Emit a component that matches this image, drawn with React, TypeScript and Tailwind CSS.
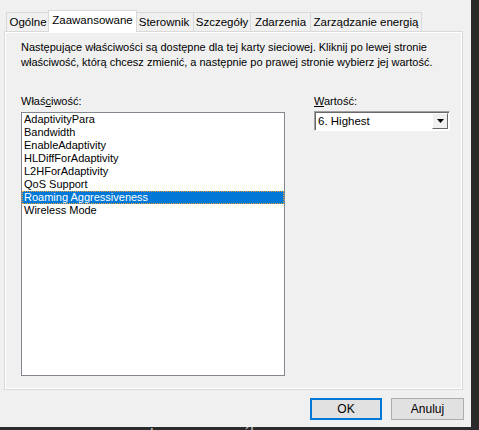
import React from "react";

const tabs = [
  { label: "Ogólne", w: "w-[44px]" },
  { label: "Zaawansowane", w: "w-[89px]", active: true },
  { label: "Sterownik", w: "w-[59px]" },
  { label: "Szczegóły", w: "w-[57px]" },
  { label: "Zdarzenia", w: "w-[60px]" },
  { label: "Zarządzanie energią", w: "w-[111px]" },
];

const props = [
  "AdaptivityPara",
  "Bandwidth",
  "EnableAdaptivity",
  "HLDiffForAdaptivity",
  "L2HForAdaptivity",
  "QoS Support",
  "Roaming Aggressiveness",
  "Wireless Mode",
];

const font = { fontFamily: "'Liberation Sans', Arial, sans-serif" };

export default function App() {
  return (
    <div className="w-[479px] h-[430px] bg-[#2b2b2b] overflow-hidden text-black" style={font}>
      <div className="w-[471px] h-[427px] bg-[#f0f0f0] flex flex-col">
        {/* tabs */}
        <div className="mt-[10px] pl-[6px] flex items-end h-[21px] text-[11.5px]">
          {tabs.map((t) =>
            t.active ? (
              <div
                key={t.label}
                className={`${t.w} h-[22px] -mx-[2px] px-[2px] relative z-10 -mb-[1px] bg-white border border-b-0 border-[#d9d9d9] flex items-center justify-center pb-[1px]`}
              >
                {t.label}
              </div>
            ) : (
              <div
                key={t.label}
                className={`${t.w} h-[19px] border border-b-0 border-l-0 first:border-l border-[#d9d9d9] flex items-center justify-center pt-[1px]`}
              >
                {t.label}
              </div>
            )
          )}
        </div>

        {/* panel */}
        <div className="ml-[4px] w-[459px] h-[359px] border border-[#d9d9d9] bg-white p-[1px]">
          <div className="w-full h-full bg-[#f0f0f0] pt-[7px] pl-[15px] text-[11px] leading-[15px]">
            <p>
              Następujące właściwości są dostępne dla tej karty sieciowej. Kliknij po lewej stronie
              <br />
              właściwość, którą chcesz zmienić, a następnie po prawej stronie wybierz jej wartość.
            </p>

            <div className="flex mt-[24px]">
              <div className="flex flex-col w-[264px]">
                <div className="h-[14px] leading-[14px]">
                  Właś<span className="underline">c</span>iwość:
                </div>
                <div className="mt-[4px] h-[264px] border border-[#828790] bg-white text-[11px] leading-[13px]">
                  {props.map((p) => (
                    <div
                      key={p}
                      className={
                        p === "Roaming Aggressiveness"
                          ? "h-[13px] pl-[2px] bg-[#0078d7] text-white outline outline-1 outline-dotted outline-[#f0a030] -outline-offset-1"
                          : "h-[13px] pl-[2px]"
                      }
                    >
                      {p}
                    </div>
                  ))}
                </div>
              </div>

              <div className="ml-[29px] flex flex-col">
                <div className="h-[14px] leading-[14px]">
                  <span className="underline">W</span>artość:
                </div>
                <div className="mt-[3px] w-[136px] h-[20px] border border-[#a0a0a0] border-r-white border-b-white bg-white flex items-center text-[11.5px] shadow-[inset_1px_1px_0_#696969]">
                  <span className="flex-1 pl-[3px]">6. Highest</span>
                  <div className="w-[16px] h-[16px] mr-[1px] bg-[#f0f0f0] border border-white border-r-[#696969] border-b-[#696969] flex items-center justify-center">
                    <svg width="7" height="4" viewBox="0 0 7 4">
                      <path d="M0 0h7L3.5 4z" fill="#000" />
                    </svg>
                  </div>
                </div>
              </div>
            </div>
          </div>
        </div>

        {/* buttons */}
        <div className="flex justify-end gap-[9px] mt-[8px] pr-[7px] text-[12px]">
          <button className="w-[72px] h-[22px] bg-[#e1e1e1] border-2 border-[#0078d7]">OK</button>
          <button className="w-[73px] h-[22px] bg-[#e1e1e1] border border-[#adadad]">Anuluj</button>
        </div>
      </div>
      <div className="h-[3px] overflow-hidden pl-[150px] text-[#cfcfcf] text-[14px] leading-[14px]">
        <div className="-mt-[1px]">Lepsze szczegóły</div>
      </div>
    </div>
  );
}
